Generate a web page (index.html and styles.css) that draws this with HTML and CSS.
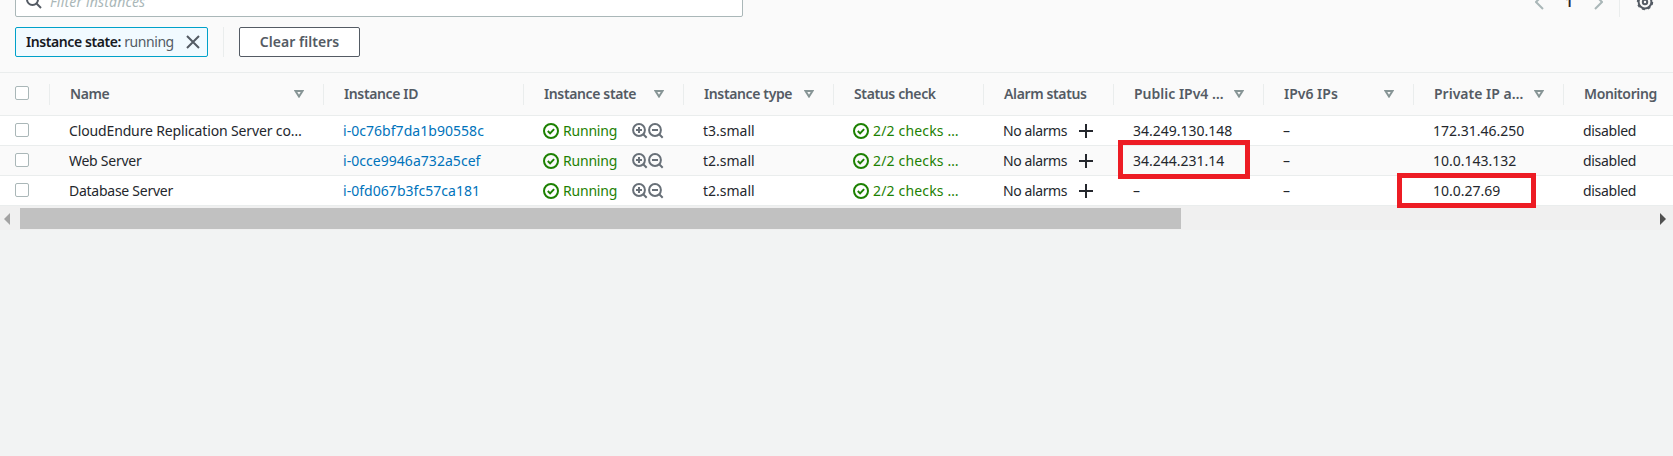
FILE: index.html
```
<!DOCTYPE html>
<html lang="en">
<head>
<meta charset="utf-8">
<title>Instances</title>
<link rel="stylesheet" href="styles.css">
</head>
<body>
<svg class="defs" aria-hidden="true">
  <symbol id="check" viewBox="0 0 16 16"><circle cx="8" cy="8" r="7"/><path d="M4.8 8l2.3 2.4 4-4.3"/></symbol>
  <symbol id="zin" viewBox="0 0 16 16"><circle cx="7" cy="7" r="5.9"/><path d="M11 11l3.7 3.7M4 7h6M7 4v6"/></symbol>
  <symbol id="zout" viewBox="0 0 16 16"><circle cx="7" cy="7" r="5.9"/><path d="M11 11l3.7 3.7M4 7h6"/></symbol>
  <symbol id="sort" viewBox="0 0 10 8"><path d="M1.5 1h7L5 6.5z"/></symbol>
  <symbol id="plus" viewBox="0 0 14 14"><path d="M7 0v14M0 7h14"/></symbol>
</svg>
<main class="panel">
  <div class="toolbar">
    <div class="search">
      <svg class="search-icon" viewBox="0 0 16 16"><circle cx="6.5" cy="6.5" r="5.5"/><path d="M10.5 10.5l4.5 4.5"/></svg>
      <span class="placeholder">Filter instances</span>
    </div>
    <div class="pager">
      <svg class="chevron" viewBox="0 0 9 16"><path d="M8 1L1 8l7 7"/></svg>
      <span class="page">1</span>
      <svg class="chevron" viewBox="0 0 9 16"><path d="M1 1l7 7-7 7"/></svg>
      <span class="pager-line"></span>
      <svg class="gear" viewBox="0 0 16 16"><circle cx="8" cy="8" r="6.4"/><circle class="teeth" cx="8" cy="8" r="7.4"/><circle cx="8" cy="8" r="2.2"/></svg>
    </div>
  </div>
  <div class="filters">
    <div class="token"><span class="token-text"><b>Instance state:</b> running</span><svg class="close" viewBox="0 0 14 14"><path d="M1 1l12 12M13 1L1 13"/></svg></div>
    <span class="divider"></span>
    <button class="clear">Clear filters</button>
  </div>
  <div class="table">
    <div class="row head">
      <div class="cell pick"><i class="box"></i></div>
      <div class="cell"><span>Name</span><svg class="sort"><use href="#sort"/></svg></div>
      <div class="cell"><span>Instance ID</span></div>
      <div class="cell"><span>Instance state</span><svg class="sort"><use href="#sort"/></svg></div>
      <div class="cell"><span>Instance type</span><svg class="sort"><use href="#sort"/></svg></div>
      <div class="cell"><span>Status check</span></div>
      <div class="cell"><span>Alarm status</span></div>
      <div class="cell cut"><span>Public IPv4 …</span><svg class="sort"><use href="#sort"/></svg></div>
      <div class="cell cut"><span>IPv6 IPs</span><svg class="sort"><use href="#sort"/></svg></div>
      <div class="cell cut"><span>Private IP a…</span><svg class="sort"><use href="#sort"/></svg></div>
      <div class="cell"><span>Monitoring</span></div>
    </div>
    <div class="row">
      <div class="cell pick"><i class="box"></i></div>
      <div class="cell"><span class="name">CloudEndure Replication Server co…</span></div>
      <div class="cell link"><span>i-0c76bf7da1b90558c</span></div>
      <div class="cell ok"><svg class="check"><use href="#check"/></svg><span class="state">Running</span><svg class="zoom"><use href="#zin"/></svg><svg class="zoom"><use href="#zout"/></svg></div>
      <div class="cell"><span>t3.small</span></div>
      <div class="cell ok"><svg class="check"><use href="#check"/></svg><span class="checks">2/2 checks …</span></div>
      <div class="cell"><span class="alarms">No alarms</span><svg class="plus"><use href="#plus"/></svg></div>
      <div class="cell"><span>34.249.130.148</span></div>
      <div class="cell"><span>–</span></div>
      <div class="cell"><span>172.31.46.250</span></div>
      <div class="cell"><span class="monitoring">disabled</span></div>
    </div>
    <div class="row alt">
      <div class="cell pick"><i class="box"></i></div>
      <div class="cell"><span class="name short">Web Server</span></div>
      <div class="cell link"><span>i-0cce9946a732a5cef</span></div>
      <div class="cell ok"><svg class="check"><use href="#check"/></svg><span class="state">Running</span><svg class="zoom"><use href="#zin"/></svg><svg class="zoom"><use href="#zout"/></svg></div>
      <div class="cell"><span>t2.small</span></div>
      <div class="cell ok"><svg class="check"><use href="#check"/></svg><span class="checks">2/2 checks …</span></div>
      <div class="cell"><span class="alarms">No alarms</span><svg class="plus"><use href="#plus"/></svg></div>
      <div class="cell"><span>34.244.231.14</span><i class="mark mark-public"></i></div>
      <div class="cell"><span>–</span></div>
      <div class="cell"><span>10.0.143.132</span></div>
      <div class="cell"><span class="monitoring">disabled</span></div>
    </div>
    <div class="row">
      <div class="cell pick"><i class="box"></i></div>
      <div class="cell"><span class="name short">Database Server</span></div>
      <div class="cell link"><span>i-0fd067b3fc57ca181</span></div>
      <div class="cell ok"><svg class="check"><use href="#check"/></svg><span class="state">Running</span><svg class="zoom"><use href="#zin"/></svg><svg class="zoom"><use href="#zout"/></svg></div>
      <div class="cell"><span>t2.small</span></div>
      <div class="cell ok"><svg class="check"><use href="#check"/></svg><span class="checks">2/2 checks …</span></div>
      <div class="cell"><span class="alarms">No alarms</span><svg class="plus"><use href="#plus"/></svg></div>
      <div class="cell"><span>–</span></div>
      <div class="cell"><span>–</span></div>
      <div class="cell"><span>10.0.27.69</span><i class="mark mark-private"></i></div>
      <div class="cell"><span class="monitoring">disabled</span></div>
    </div>
  </div>
  <div class="scrollbar">
    <svg class="arrow" viewBox="0 0 6 12"><path d="M6 0v12L0 6z"/></svg>
    <div class="thumb"></div>
    <svg class="arrow right" viewBox="0 0 6 12"><path d="M0 0v12l6-6z"/></svg>
  </div>
</main>
</body>
</html>
```
FILE: styles.css
```
* { box-sizing: border-box; }
body { margin: 0; height: 456px; overflow: hidden; background: #f2f3f3; color: #24272d; font: 14px/20px "Noto Sans", sans-serif; }
svg { fill: none; stroke: currentColor; flex: none; }
.defs { display: none; }
.panel { background: #fafafa; width: 1673px; overflow: hidden; }
.toolbar { display: flex; justify-content: space-between; height: 34px; margin-top: -17px; padding: 0 20px 0 15px; }
.search { width: 728px; height: 34px; border: 1px solid #aab7b8; border-radius: 2px; background: #fff; display: flex; align-items: center; padding-left: 10px; }
.search-icon { width: 16px; height: 16px; color: #545b64; stroke-width: 2; margin-top: 1px; }
.placeholder { margin-left: 8px; color: #aab7b8; font-style: italic; letter-spacing: .17px; margin-top: 3px; }
.pager { display: flex; height: 34px; align-items: center; }
.chevron { width: 9px; height: 16px; color: #aab7b8; stroke-width: 2; margin-top: 4px; }
.page { width: 50px; text-align: center; font-weight: 600; margin-top: 4px; }
.pager-line { width: 1px; height: 34px; background: #eaeded; margin: 0 17px 0 16px; }
.gear { width: 16px; height: 16px; color: #545b64; stroke-width: 2; margin-top: 4px; overflow: visible; }
.teeth { stroke-width: 1.6; stroke-dasharray: 2.9 2.91; }
.filters { display: flex; padding: 10px 0 0 15px; height: 55px; }
.token { width: 193px; height: 30px; border: 1px solid #00a1c9; border-radius: 2px; background: #f1faff; display: flex; align-items: center; justify-content: space-between; padding: 0 7px 0 10px; color: #545b64; }
.token b { color: #16191f; font-weight: 600; }
.token-text { white-space: nowrap; letter-spacing: -.42px; }
.close { width: 14px; height: 14px; stroke-width: 2; }
.divider { width: 1px; height: 30px; background: #eaeded; margin: 0 15px; }
.clear { width: 121px; height: 30px; border: 1px solid #545b64; border-radius: 2px; background: #fff; color: #545b64; font: 600 14px/20px "Noto Sans", sans-serif; padding: 0; letter-spacing: .05px; }
.row { display: grid; width: 1714px; grid-template-columns: 50px 274px 200px 160px 150px 150px 130px 150px 150px 150px 150px; height: 30px; background: #fff; border-bottom: 1px solid #eaeded; }
.alt { background: #fafafa; }
.cell { position: relative; display: flex; align-items: center; padding-left: 19px; white-space: nowrap; }
.cell.pick { padding: 0 0 0 15px; }
.head { height: 44px; border-top: 1px solid #eaeded; background: #fafafa; color: #545b64; font-weight: 600; letter-spacing: -.37px; }
.head .cell { height: 21px; margin-top: 11px; padding: 0 19px 2px 20px; border-right: 1px solid #eaeded; justify-content: space-between; }
.head .pick { padding: 0 0 0 15px; }
.head .cut { letter-spacing: 0; }
.box { width: 14px; height: 14px; border: 1px solid #aab7b8; border-radius: 2px; background: #fff; }
.row .box { margin-top: -1px; }
.head .box { margin-top: -3px; }
.sort { width: 10px; height: 8px; color: #879596; stroke-width: 2; }
.link { color: #0073bb; letter-spacing: .04px; }
.name { letter-spacing: -.14px; }
.name.short { letter-spacing: -.26px; }
.ok { color: #1d8102; }
.check { width: 16px; height: 16px; stroke-width: 2; margin: 1px 4px 0 0; }
.state { width: 69px; letter-spacing: -.2px; }
.checks { letter-spacing: .17px; }
.alarms { width: 74px; letter-spacing: -.4px; }
.monitoring { letter-spacing: -.3px; }
.zoom { width: 16px; height: 16px; stroke-width: 2; color: #687078; }
.plus { width: 14px; height: 14px; stroke-width: 2; margin-left: 2px; }
.mark { position: absolute; border: 5px solid #ed1c24; }
.mark-public { left: 4px; top: -6px; width: 132px; height: 39px; }
.mark-private { left: -17px; top: -3px; width: 139px; height: 35px; z-index: 2; }
.scrollbar { height: 24px; background: #f0f0f0; display: flex; align-items: center; padding: 2px 7px 1px 4px; }
.arrow { width: 6px; height: 12px; fill: #a3a3a3; stroke: none; }
.arrow.right { fill: #505050; margin-left: auto; }
.thumb { width: 1161px; height: 21px; margin-left: 10px; background: #c1c1c1; }
```
